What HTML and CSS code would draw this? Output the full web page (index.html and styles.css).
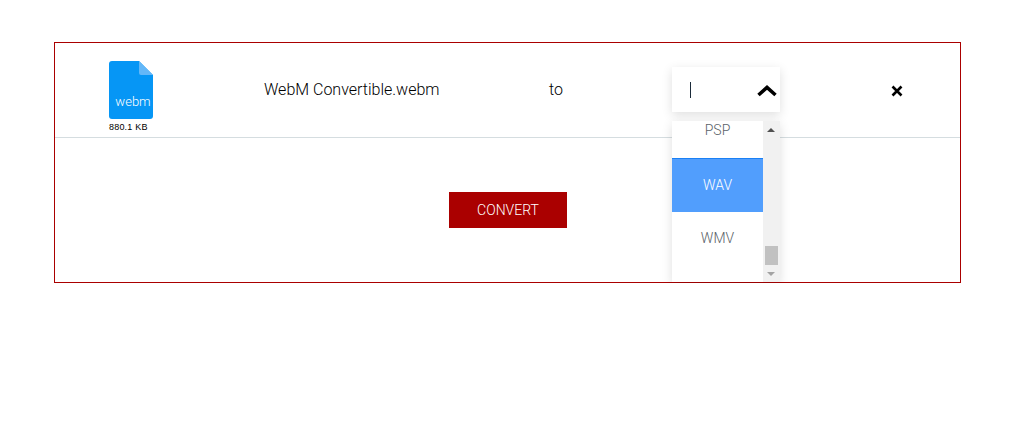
FILE: index.html
```html
<!DOCTYPE html>
<html lang="en">

<head>
    <meta charset="UTF-8">
    <title>WebM Converter</title>
    <link rel="stylesheet" href="styles.css">
</head>

<body>
    <div class="frame">
        <div class="file-row">
            <div class="file-info">
                <svg class="file-icon" width="44" height="58" viewBox="0 0 44 58">
                    <path d="M3 0H30L44 14V55a3 3 0 0 1-3 3H3a3 3 0 0 1-3-3V3a3 3 0 0 1 3-3Z" fill="#0696f5"/>
                    <path d="M30 0L44 14H32a2 2 0 0 1-2-2Z" fill="#63b7f8"/>
                    <text x="24" y="45" text-anchor="middle" class="file-ext">webm</text>
                </svg>
                <div class="file-size">880.1 KB</div>
            </div>
            <div class="file-name">WebM Convertible.webm</div>
            <div class="file-to">to</div>
            <div class="format-select">
                <span class="caret"></span>
                <svg class="chevron" width="20" height="12" viewBox="0 0 20 12">
                    <path d="M1.5 10L10 2.5L18.5 10" fill="none" stroke="#000" stroke-width="3.6"/>
                </svg>
                <div class="dropdown">
                    <div class="options">
                        <div class="option">PSP</div>
                        <div class="option active">WAV</div>
                        <div class="option">WMV</div>
                    </div>
                    <div class="scrollbar">
                        <span class="arrow-up"></span>
                        <span class="thumb"></span>
                        <span class="arrow-down"></span>
                    </div>
                </div>
            </div>
            <svg class="remove" width="12" height="12" viewBox="0 0 12 12">
                <path d="M1.5 1.5L10.5 10.5M10.5 1.5L1.5 10.5" stroke="#000" stroke-width="2.6"/>
            </svg>
        </div>
        <div class="actions">
            <button class="convert">CONVERT</button>
        </div>
    </div>
</body>

</html>
```

FILE: styles.css
```css
body {
    margin: 0;
    background: #fff;
    font-family: Roboto, "Liberation Sans", sans-serif;
    font-weight: 300;
}

.frame {
    width: 905px;
    height: 239px;
    margin: 42px 0 0 54px;
    border: 1px solid #aa0000;
}

.file-row {
    display: grid;
    grid-template-columns: 155px 285px 123px 219px 12px;
    height: 94px;
    padding-left: 54px;
    border-bottom: 1px solid #d5dde0;
    box-sizing: content-box;
}

.file-info {
    padding-top: 18px;
}

.file-icon {
    display: block;
}

.file-ext {
    font-family: Roboto, sans-serif;
    font-size: 13px;
    font-weight: 300;
    fill: #fff;
}

.file-size {
    font-family: "Liberation Sans", sans-serif;
    font-weight: 400;
    font-size: 9px;
    line-height: 16px;
    color: #000;
    letter-spacing: 0.2px;
}

.file-name,
.file-to {
    font-size: 16px;
    line-height: 20px;
    padding-top: 37px;
    color: #000;
}

.format-select {
    position: relative;
    width: 108px;
    height: 45px;
    margin-top: 24px;
    background: #fff;
    box-shadow: 0 3px 10px rgba(0, 0, 0, 0.13);
}

.caret {
    position: absolute;
    left: 18px;
    top: 15px;
    width: 1px;
    height: 16px;
    background: #1b2b3a;
}

.chevron {
    position: absolute;
    left: 85px;
    top: 18px;
}

.dropdown {
    position: absolute;
    left: 0;
    top: 54px;
    display: flex;
    width: 108px;
    height: 161px;
    background: #fff;
    box-shadow: 0 3px 10px rgba(0, 0, 0, 0.13);
}

.options {
    width: 91px;
    overflow: hidden;
}

.option {
    height: 54px;
    line-height: 52px;
    text-align: center;
    font-size: 14px;
    color: #5a6268;
}

.option:first-child {
    height: 37px;
    line-height: 18px;
}

.option.active {
    height: 53px;
    border-top: 1px solid #1a80f5;
    background: #519efd;
    color: #fff;
}

.scrollbar {
    position: relative;
    width: 17px;
    background: #f1f1f1;
}

.arrow-up,
.arrow-down {
    position: absolute;
    left: 4px;
    width: 0;
    height: 0;
    border-left: 4px solid transparent;
    border-right: 4px solid transparent;
}

.arrow-up {
    top: 7px;
    border-bottom: 4px solid #505050;
}

.arrow-down {
    bottom: 6px;
    border-top: 4px solid #a3a3a3;
}

.thumb {
    position: absolute;
    left: 2px;
    top: 125px;
    width: 13px;
    height: 19px;
    background: #c1c1c1;
}

.remove {
    margin-top: 42px;
}

.actions {
    display: flex;
    justify-content: center;
    padding: 54px 0 0 1px;
}

.convert {
    width: 118px;
    height: 36px;
    border: none;
    background: #aa0000;
    color: #fff;
    font-family: Roboto, sans-serif;
    font-weight: 300;
    font-size: 14px;
}
```
